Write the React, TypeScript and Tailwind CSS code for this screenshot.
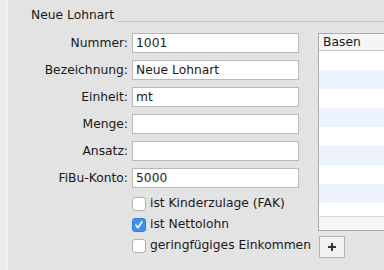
import React from "react";

const fields = [
  { label: "Nummer:", value: "1001" },
  { label: "Bezeichnung:", value: "Neue Lohnart" },
  { label: "Einheit:", value: "mt" },
  { label: "Menge:", value: "" },
  { label: "Ansatz:", value: "" },
  { label: "FiBu-Konto:", value: "5000" },
];

const checks = [
  { label: "ist Kinderzulage (FAK)", checked: false },
  { label: "ist Nettolohn", checked: true },
  { label: "geringfügiges Einkommen", checked: false },
];

function Checkbox({ checked }: { checked: boolean }) {
  if (checked) {
    return (
      <div className="flex h-[14px] w-[14px] items-center justify-center rounded-[3px] bg-[#3b8ff6] border border-[#2f7fe6]">
        <svg width="10" height="10" viewBox="0 0 10 10">
          <path d="M2 5.2 L4 7.8 L8 1.8" fill="none" stroke="white" strokeWidth="1.6" strokeLinecap="round" strokeLinejoin="round" />
        </svg>
      </div>
    );
  }
  return <div className="h-[14px] w-[14px] rounded-[3px] border border-[#b0b0b0] bg-white" />;
}

export default function App() {
  return (
    <div
      className="flex h-[270px] w-[384px] overflow-hidden bg-[#e3e3e3] text-[12.3px] text-[#1a1a1a]"
      style={{ fontFamily: '"DejaVu Sans", sans-serif' }}
    >
      {/* Left strip */}
      <div className="w-[8px] shrink-0 bg-[#ececec] border-r border-[#f2f2f2]" />

      <div className="flex min-w-0 flex-1 flex-col">
        {/* Group title */}
        <div className="flex h-[33px] items-start pl-[23px] pt-[8px]">
          <span className="leading-[15px]">Neue Lohnart</span>
          <div className="ml-[2px] mt-[13px] h-px flex-1 bg-[#c8c8c8]" />
        </div>

        <div className="flex">
          {/* Form */}
          <div className="flex w-[310px] shrink-0 flex-col">
            <div className="flex flex-col gap-[7px]">
              {fields.map((f) => (
                <div key={f.label} className="flex h-[20px] items-center">
                  <span className="w-[120px] text-right">{f.label}</span>
                  <div className="ml-[4px] flex h-[20px] w-[167px] items-center border border-[#b8b8b8] bg-white pl-[3px]">
                    {f.value}
                  </div>
                </div>
              ))}
            </div>
            <div className="mt-[5px] flex flex-col pl-[124px]">
              {checks.map((c) => (
                <div key={c.label} className="flex h-[21px] items-center gap-[4px]">
                  <Checkbox checked={c.checked} />
                  <span>{c.label}</span>
                </div>
              ))}
            </div>
          </div>

          {/* Table */}
          <div className="flex flex-col">
            <div className="flex h-[198px] w-[80px] flex-col border-l border-t border-b border-[#ababab] bg-white">
              <div className="flex h-[17px] items-center border-b border-[#c8c8c8] bg-[#f5f5f5] pl-[4px]">
                Basen
              </div>
              {Array.from({ length: 8 }).map((_, i) => (
                <div key={i} className={i % 2 === 1 ? "h-[19px] bg-[#edf3fe]" : "h-[19px] bg-white"} />
              ))}
              <div className="h-[13px] bg-white" />
              <div className="flex-1 border-t border-[#dadada] bg-[#f5f5f5]" />
            </div>
            <div className="ml-[1px] mt-[5px] flex h-[22px] w-[26px] items-center justify-center border border-[#b4b4b4] bg-[#f1f1f1]">
              <svg width="10" height="10" viewBox="0 0 10 10">
                <path d="M5 1 V9 M1 5 H9" stroke="#333" strokeWidth="2" />
              </svg>
            </div>
          </div>
        </div>
      </div>
    </div>
  );
}
